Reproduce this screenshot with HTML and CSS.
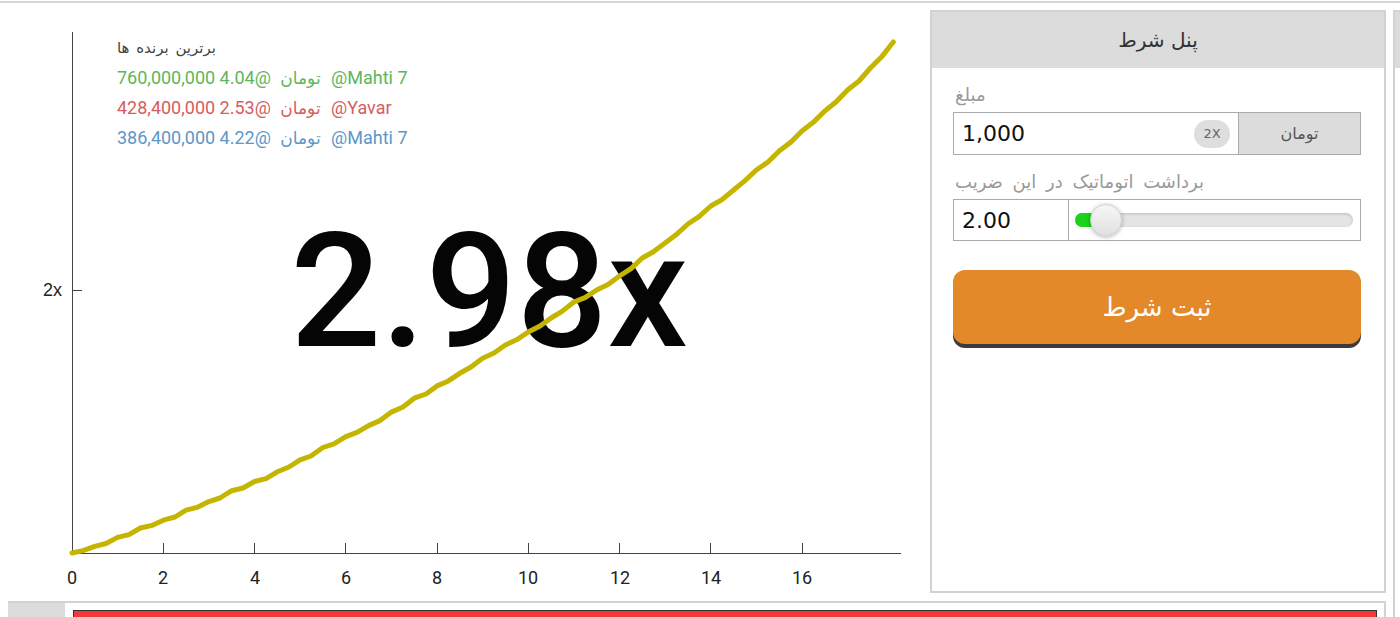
FILE: index.html
```html
<!DOCTYPE html>
<html lang="fa">
<head>
    <meta charset="UTF-8">
    <title>Crash</title>
    <link rel="stylesheet" href="styles.css">
</head>
<body>
    <div class="topline"></div>
    <div class="page">
        <div class="content">
            <div class="main">
                <div class="chart">
                    <svg class="graph" width="920" height="583" viewBox="0 10 920 583">
                        <g class="axis">
                            <line x1="72.5" y1="32" x2="72.5" y2="553.5"/>
                            <line x1="72" y1="553.5" x2="901" y2="553.5"/>
                            <line x1="72.5" y1="290.5" x2="82" y2="290.5"/>
                            <line x1="163.5" y1="543" x2="163.5" y2="553"/>
                            <line x1="254.5" y1="543" x2="254.5" y2="553"/>
                            <line x1="345.5" y1="543" x2="345.5" y2="553"/>
                            <line x1="437.5" y1="543" x2="437.5" y2="553"/>
                            <line x1="528.5" y1="543" x2="528.5" y2="553"/>
                            <line x1="619.5" y1="543" x2="619.5" y2="553"/>
                            <line x1="710.5" y1="543" x2="710.5" y2="553"/>
                            <line x1="802.5" y1="543" x2="802.5" y2="553"/>
                        </g>
                        <text class="y-label" x="62" y="296" text-anchor="end">2x</text>
                        <g class="x-labels" text-anchor="middle">
                            <text x="72" y="584">0</text>
                            <text x="163" y="584">2</text>
                            <text x="255" y="584">4</text>
                            <text x="346" y="584">6</text>
                            <text x="437" y="584">8</text>
                            <text x="528" y="584">10</text>
                            <text x="620" y="584">12</text>
                            <text x="711" y="584">14</text>
                            <text x="802" y="584">16</text>
                        </g>
                        <text class="multiplier" x="489" y="346" text-anchor="middle">2.98x</text>
                        <polyline class="curve" points="72,553 83,550.6 94.8,546.4 106,543.5 117.6,537.4 129,534.6 140.4,528 152,525.4 163.3,520.2 175,517 186.1,510.1 197,507.4 208.9,501.6 220,498 231.7,490.7 243,488 254.5,481.5 266,478.6 277.3,471.8 289,467 300.1,459.8 311,456 322.9,447.5 334,443.8 345.8,436.7 357,432.4 368.6,425.6 380,420.6 391.4,412.1 403,407 414.2,398.2 426,394 437,385.9 448,381.2 459.8,373.3 471,367 482.6,358.3 494,353 505.4,345 517,339.6 528.3,332 540,326 551.1,318 562,311.4 573.9,302 585,297.6 596.7,290 608,284.6 619.5,276 631,268.6 642.3,258 653,252 665.1,243 676,234.8 687.9,224 699,216.6 710.8,206 722,199.6 733.6,190 745,180.6 756.4,170 768,162 779.2,151 791,142 802,131 813,122.6 824.8,111 836,102 847.6,90 859,81 870.4,68 882,56.4 893.3,42"/>
                    </svg>

                    <div class="leaders">
                        <div class="leaders-title">برترین برنده ها</div>
                        <div class="winner win-green"><bdi>760,000,000 4.04@</bdi> <bdi class="cur">تومان</bdi> <bdi>@Mahti 7</bdi></div>
                        <div class="winner win-red"><bdi>428,400,000 2.53@</bdi> <bdi class="cur">تومان</bdi> <bdi>@Yavar</bdi></div>
                        <div class="winner win-blue"><bdi>386,400,000 4.22@</bdi> <bdi class="cur">تومان</bdi> <bdi>@Mahti 7</bdi></div>
                    </div>
                </div>

                <div class="panel">
                    <div class="panel-head">پنل شرط</div>
                    <div class="panel-body">
                        <div class="field-label">مبلغ</div>
                        <div class="amount-row">
                            <div class="amount-input">
                                <span class="amount-value">1,000</span>
                                <span class="double">2X</span>
                            </div>
                            <div class="currency">تومان</div>
                        </div>

                        <div class="field-label second">برداشت اتوماتیک در این ضریب</div>
                        <div class="auto-row">
                            <div class="auto-value">2.00</div>
                            <div class="slider">
                                <div class="track">
                                    <div class="fill"></div>
                                    <div class="knob"></div>
                                </div>
                            </div>
                        </div>

                        <button class="bet-btn">ثبت شرط</button>
                    </div>
                </div>
            </div>

            <div class="history">
                <div class="history-side"></div>
                <div class="history-bar"></div>
            </div>
        </div>

        <div class="side-panel">
            <div class="side-head"></div>
        </div>
    </div>
</body>
</html>
```

FILE: styles.css
```css
html, body {
    margin: 0;
    padding: 0;
    overflow: hidden;
    background-color: #ffffff;
}

body {
    width: 1400px;
    height: 617px;
    font-family: Roboto, "DejaVu Sans", sans-serif;
    color: #222222;
}

.topline {
    height: 2px;
    margin-top: 1px;
    background-color: #d6d6d6;
}

.page {
    display: flex;
    padding-top: 7px;
}

.content {
    width: 1386px;
    flex: none;
}

.main {
    display: flex;
    height: 583px;
}

/* chart */

.chart {
    position: relative;
    width: 920px;
    flex: none;
}

.graph {
    display: block;
}

.axis line {
    stroke: #444444;
    stroke-width: 1;
}

.y-label {
    font-family: "Liberation Sans", Arial, sans-serif;
    font-size: 18px;
    fill: #222222;
}

.x-labels text {
    font-family: Roboto, sans-serif;
    font-size: 18px;
    fill: #222222;
}

.multiplier {
    font-family: Roboto, sans-serif;
    font-size: 160px;
    font-weight: 500;
    fill: #050505;
}

.curve {
    fill: none;
    stroke: #c4b500;
    stroke-width: 5;
    stroke-linejoin: round;
    stroke-linecap: round;
}

.leaders {
    position: absolute;
    left: 117px;
    top: 23px;
    font-size: 18px;
    line-height: 30px;
    white-space: nowrap;
}

.leaders-title {
    font-family: "DejaVu Sans", sans-serif;
    font-size: 15px;
    color: #444444;
    word-spacing: 2px;
}

.winner .cur {
    font-family: "DejaVu Sans", sans-serif;
    font-size: 17px;
    margin: 0 6px 0 5px;
}

.win-green {
    color: #5cb65c;
}

.win-red {
    color: #d55d5d;
}

.win-blue {
    color: #5b97c8;
}

/* bet panel */

.panel {
    margin-left: 10px;
    width: 456px;
    flex: none;
    box-sizing: border-box;
    border: 2px solid #d2d2d2;
}

.panel-head {
    height: 56px;
    background-color: #dcdcdc;
    display: flex;
    align-items: center;
    justify-content: center;
    font-family: "DejaVu Sans", sans-serif;
    font-size: 20px;
    color: #333333;
}

.panel-body {
    padding: 15px 23px 0 21px;
}

.field-label {
    font-family: "DejaVu Sans", sans-serif;
    font-size: 18px;
    line-height: 24px;
    word-spacing: 4px;
    color: #9a9a9a;
    padding-left: 2px;
    margin-bottom: 5px;
}

.field-label.second {
    margin-top: 15px;
}

.amount-row,
.auto-row {
    display: flex;
    box-sizing: border-box;
    border: 1px solid #ababab;
}

.amount-row {
    height: 43px;
}

.auto-row {
    height: 42px;
}

.amount-input {
    flex: 1;
    display: flex;
    align-items: center;
    padding: 0 8px;
}

.amount-value,
.auto-value {
    font-family: "DejaVu Sans", sans-serif;
    font-size: 22px;
    color: #111111;
}

.amount-value {
    flex: 1;
}

.double {
    width: 36px;
    height: 28px;
    border-radius: 14px;
    background-color: #dedede;
    color: #666666;
    font-family: "DejaVu Sans", sans-serif;
    font-size: 13px;
    display: flex;
    align-items: center;
    justify-content: center;
}

.currency {
    width: 121px;
    background-color: #dcdcdc;
    border-left: 1px solid #ababab;
    display: flex;
    align-items: center;
    justify-content: center;
    font-family: "DejaVu Sans", sans-serif;
    font-size: 16px;
    color: #555555;
}

.auto-value {
    width: 106px;
    padding-left: 8px;
    border-right: 1px solid #ababab;
    display: flex;
    align-items: center;
}

.slider {
    flex: 1;
    display: flex;
    align-items: center;
    padding: 0 7px 0 6px;
}

.track {
    position: relative;
    flex: 1;
    height: 14px;
    border-radius: 7px;
    background-color: #e4e4e4;
    box-shadow: inset 0 1px 3px rgba(0, 0, 0, 0.18);
}

.fill {
    width: 26px;
    height: 100%;
    border-radius: 7px 0 0 7px;
    background-color: #1ad31a;
}

.knob {
    position: absolute;
    left: 15px;
    top: -9px;
    width: 32px;
    height: 32px;
    box-sizing: border-box;
    border-radius: 50%;
    border: 1px solid #d0d0d0;
    background: linear-gradient(#f6f6f6, #e1e1e1);
    box-shadow: 0 1px 4px rgba(0, 0, 0, 0.3);
}

.bet-btn {
    display: block;
    width: 100%;
    height: 74px;
    margin-top: 29px;
    border: none;
    border-radius: 12px;
    background-color: #e3892a;
    color: #ffffff;
    font-family: "DejaVu Sans", sans-serif;
    font-size: 26px;
    box-shadow: 0 4px 0 #3b3b3b;
    cursor: pointer;
}

/* history strip */

.history {
    display: flex;
    height: 14px;
    margin: 8px 0 0 8px;
    border-top: 2px solid #d2d2d2;
    border-right: 2px solid #d2d2d2;
}

.history-side {
    width: 57px;
    background-color: #dcdcdc;
}

.history-bar {
    flex: 1;
    margin: 7px 7px 0 8px;
    box-sizing: border-box;
    border: 1px solid #333333;
    border-bottom: none;
    background-color: #f23a3a;
}

/* next panel, cut by the window */

.side-panel {
    flex: 1;
    margin-left: 7px;
    height: 605px;
    border-left: 2px solid #d2d2d2;
    border-top: 2px solid #d2d2d2;
}

.side-head {
    height: 56px;
    background-color: #dcdcdc;
}
```
